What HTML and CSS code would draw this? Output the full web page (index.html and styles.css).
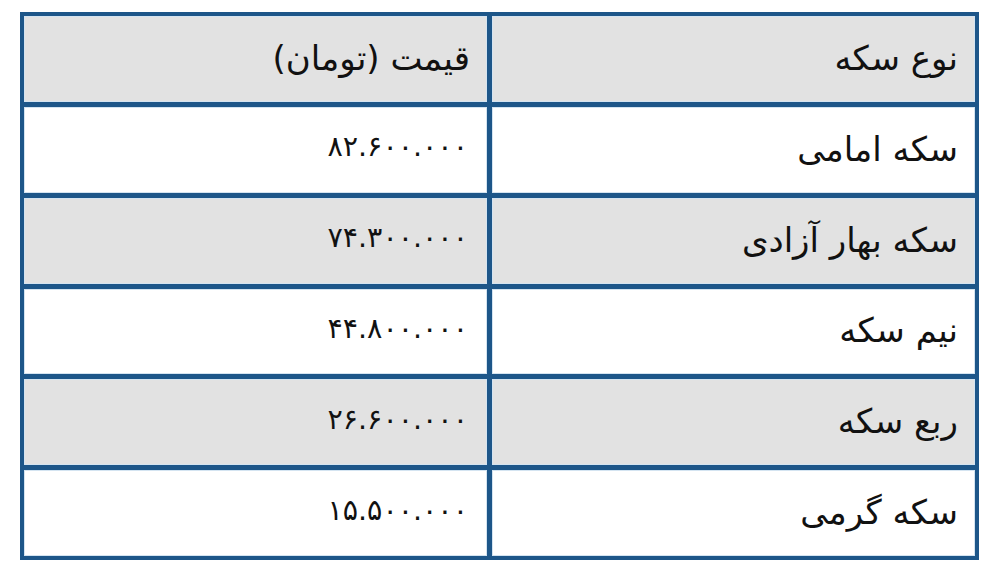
FILE: index.html
```html
<!DOCTYPE html>
<html lang="fa" dir="rtl">
<head>
<meta charset="utf-8">
<link rel="stylesheet" href="styles.css">
</head>
<body>
<div class="table">
  <div class="cell head">نوع سکه</div>
  <div class="cell head">قیمت (تومان)</div>
  <div class="cell">سکه امامی</div>
  <div class="cell num">۸۲.۶۰۰.۰۰۰</div>
  <div class="cell alt">سکه بهار آزادی</div>
  <div class="cell alt num">۷۴.۳۰۰.۰۰۰</div>
  <div class="cell">نیم سکه</div>
  <div class="cell num">۴۴.۸۰۰.۰۰۰</div>
  <div class="cell alt">ربع سکه</div>
  <div class="cell alt num">۲۶.۶۰۰.۰۰۰</div>
  <div class="cell">سکه گرمی</div>
  <div class="cell num">۱۵.۵۰۰.۰۰۰</div>
</div>
</body>
</html>
```
FILE: styles.css
```css
html, body {
  margin: 0;
  padding: 0;
  background: #ffffff;
}
body {
  width: 1000px;
  height: 584px;
  overflow: hidden;
  padding-top: 12px;
  box-sizing: border-box;
}
.table {
  direction: rtl;
  margin-right: 21px;
  width: 959px;
  height: 548px;
  box-sizing: border-box;
  padding: 4px;
  background: #1d5689;
  display: grid;
  grid-template-columns: 483px 463px;
  grid-template-rows: repeat(6, 1fr);
  gap: 5px;
}
.cell {
  background: #ffffff;
  box-shadow: inset 0 0 0 1px #d4e4f1;
  display: flex;
  align-items: center;
  justify-content: flex-start;
  padding-right: 17px;
  padding-bottom: 2px;
  font-family: "DejaVu Sans", sans-serif;
  font-size: 34px;
  color: #111111;
}
.num {
  font-size: 28.5px;
  padding-right: 19px;
  padding-bottom: 6px;
}
.head, .alt {
  background: #e2e2e2;
}
```
